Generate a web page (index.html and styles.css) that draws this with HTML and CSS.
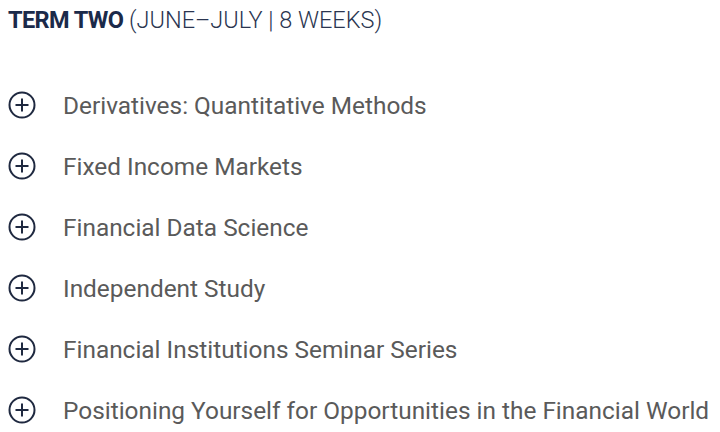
FILE: index.html
```html
<!DOCTYPE html>
<html>
<head>
<meta charset="utf-8">
<link rel="stylesheet" href="styles.css">
</head>
<body>
<div class="term">
  <h2 class="term-title"><strong>TERM TWO</strong> <span class="term-sub">(JUNE–JULY | 8 WEEKS)</span></h2>
  <ul class="courses">
    <li class="course"><svg class="plus" viewBox="0 0 28 28"><circle cx="14" cy="14" r="12.5"/><path d="M14 7.5v13M7.5 14h13"/></svg><span>Derivatives: Quantitative Methods</span></li>
    <li class="course"><svg class="plus" viewBox="0 0 28 28"><circle cx="14" cy="14" r="12.5"/><path d="M14 7.5v13M7.5 14h13"/></svg><span>Fixed Income Markets</span></li>
    <li class="course"><svg class="plus" viewBox="0 0 28 28"><circle cx="14" cy="14" r="12.5"/><path d="M14 7.5v13M7.5 14h13"/></svg><span>Financial Data Science</span></li>
    <li class="course"><svg class="plus" viewBox="0 0 28 28"><circle cx="14" cy="14" r="12.5"/><path d="M14 7.5v13M7.5 14h13"/></svg><span>Independent Study</span></li>
    <li class="course"><svg class="plus" viewBox="0 0 28 28"><circle cx="14" cy="14" r="12.5"/><path d="M14 7.5v13M7.5 14h13"/></svg><span>Financial Institutions Seminar Series</span></li>
    <li class="course"><svg class="plus" viewBox="0 0 28 28"><circle cx="14" cy="14" r="12.5"/><path d="M14 7.5v13M7.5 14h13"/></svg><span>Positioning Yourself for Opportunities in the Financial World</span></li>
  </ul>
</div>
</body>
</html>
```
FILE: styles.css
```css
html, body { margin: 0; padding: 0; background: #fff; }
body { font-family: Roboto, "Noto Sans", sans-serif; }
.term { padding: 5px 0 0 8px; }
.term-title {
  margin: 0;
  font-size: 23.5px;
  line-height: 30px;
  font-weight: 300;
  color: #2a3550;
}
.term-title strong { font-weight: 700; color: #1b2a4a; letter-spacing: -0.6px; }
.courses { list-style: none; margin: 0; padding: 0; margin-top: 50px; display: flex; flex-direction: column; gap: 21px; }
.course { display: flex; align-items: center; height: 40px; gap: 27px; font-size: 24.4px; color: #5a5a5a; }
.plus { width: 28px; height: 28px; flex: none; fill: none; stroke: #1f2940; stroke-width: 2; }
```
